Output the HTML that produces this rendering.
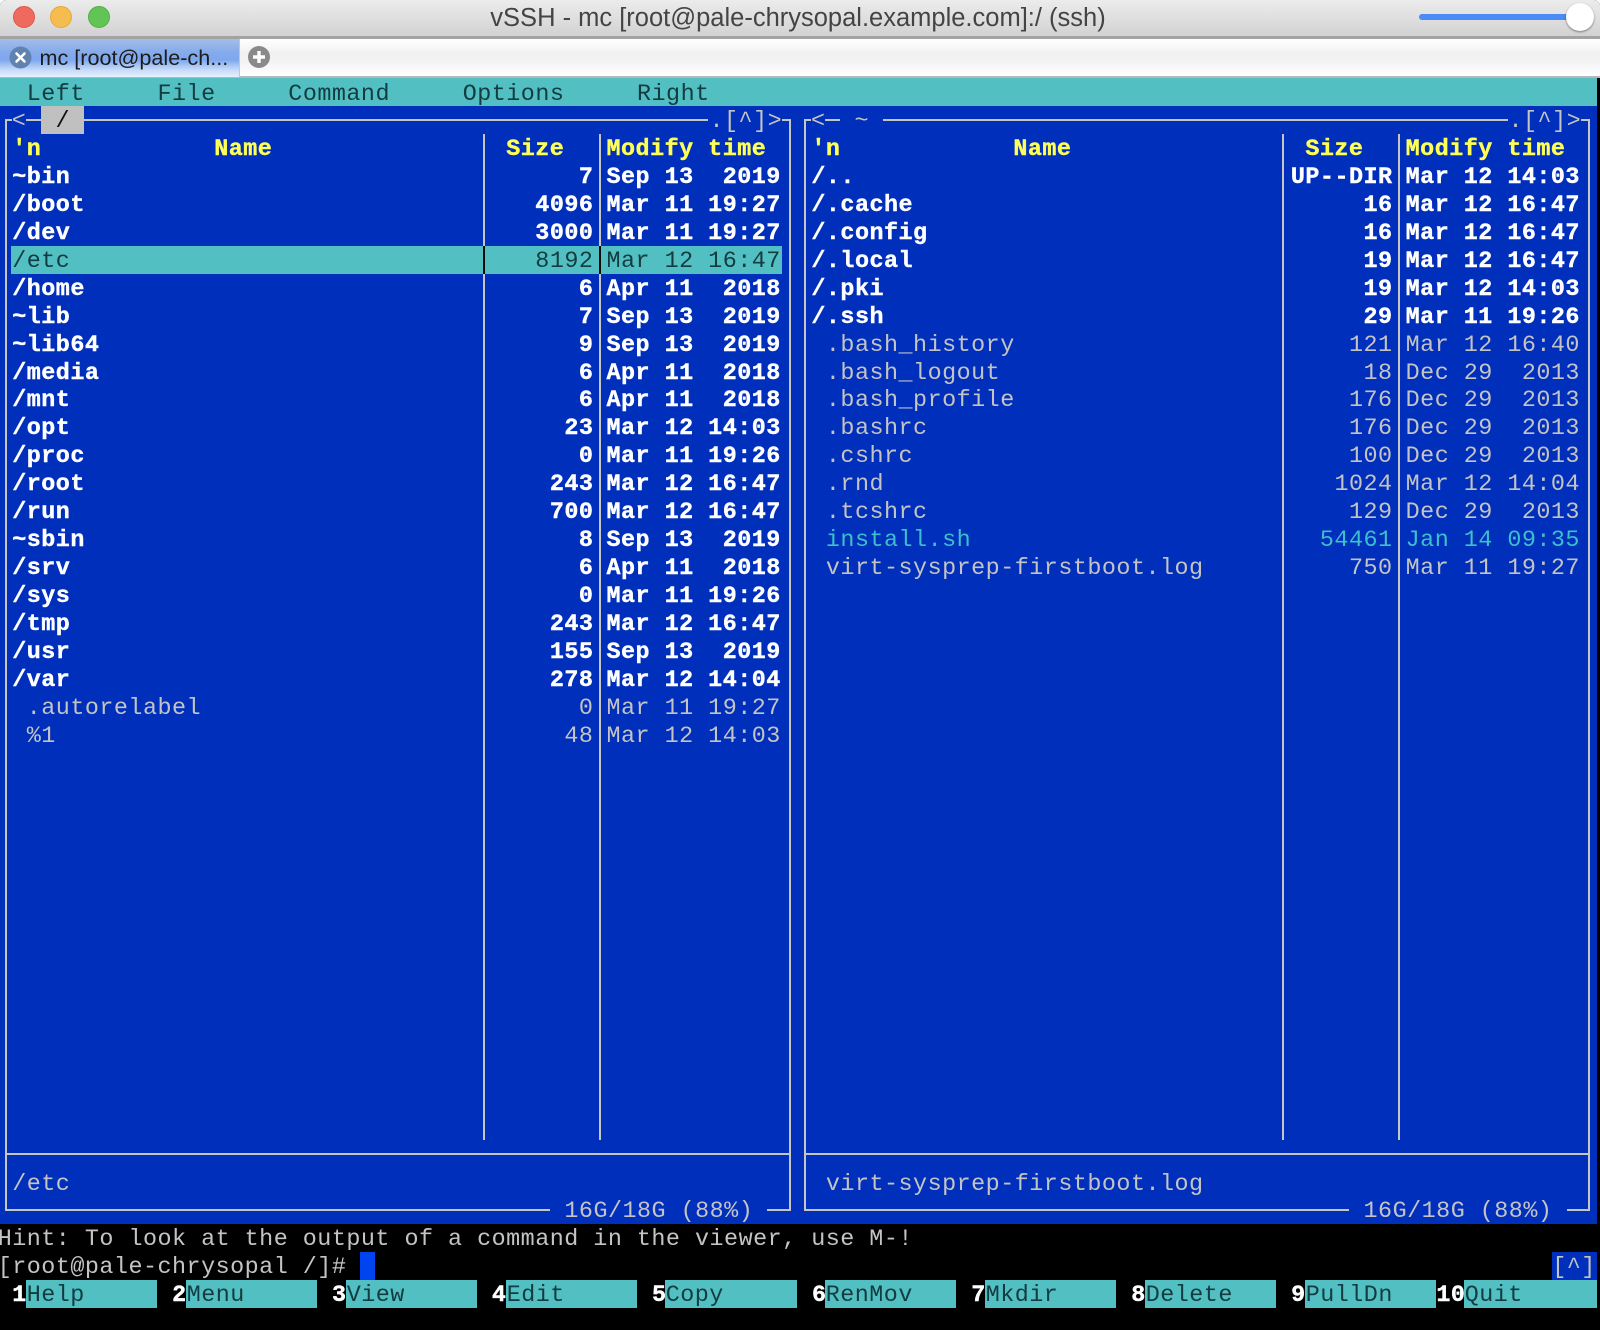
<!DOCTYPE html>
<html><head><meta charset="utf-8"><title>vSSH - mc</title>
<style>
html,body{margin:0;padding:0;background:#fff}
#w{position:relative;width:1600px;height:1330px;overflow:hidden;background:#000;font-family:"Liberation Sans",sans-serif;border-radius:6px 6px 0 0}
#w div,#w span{position:absolute;box-sizing:border-box}
#tb{left:0;top:0;width:1600px;height:39px;background:linear-gradient(#ececec,#d2d2d2);border-bottom:3px solid #a3a3a3}
.tl{width:22px;height:22px;border-radius:50%;top:6px}
#title{left:0;top:0;width:1596px;height:36px;line-height:36px;text-align:center;font-size:25.5px;color:#444;white-space:pre}
#track{left:1419px;top:14px;width:160px;height:6px;border-radius:3px;background:#4a8bf5}
#knob{left:1566px;top:3px;width:28px;height:28px;border-radius:50%;background:#fff;box-shadow:0 1px 2px rgba(0,0,0,.45)}
#tabs{left:0;top:39px;width:1600px;height:39px;background:linear-gradient(#fff 0,#f1f1f1 40%,#f3f3f3 60%,#fff 100%);border-bottom:2px solid #b8b8b8}
#tab{left:0;top:39px;width:239.5px;height:38px;background:linear-gradient(#a2bde9 0,#85abeb 35%,#7ea7ee 55%,#c4d9f8 80%,#e6f0fd 100%);border-right:1px solid #c6c6c6}
#tabt{left:39.5px;top:39px;height:38px;line-height:38px;font-size:21.6px;color:#1c1c1c;white-space:pre}
#term{left:0;top:0;width:1600px;height:1330px;font-family:"Liberation Mono",monospace;font-size:23.4px;letter-spacing:.49px;line-height:32px;color:#c8c8c8}
.t{white-space:pre;height:27.93px}
.b{font-weight:700;color:#fff;-webkit-text-stroke:.4px #fff}
.y{font-weight:700;color:#ffff55;-webkit-text-stroke:.4px #ffff55}
.k{color:#123c40}
.g{color:#c4c4c4}
.c{color:#3cc0ca}
.ln{background:#c6c6c6}
.row{left:0;width:799px;height:27.93px}
.n{left:14.53px;top:0;white-space:pre}
.s{left:494.02px;top:0;width:101.7px;text-align:right;white-space:pre}
.d{left:608.8px;top:0;white-space:pre}
.fb{left:0;top:0;width:100%;height:100%}
</style></head><body>
<div id="w">
<div id="term">
<div style="left:0;top:78px;width:1596.7px;height:28px;background:#52c0c3"></div>
<div style="left:0;top:106px;width:1596.7px;height:1118px;background:#002fbc"></div>
<div style="left:11px;top:245.7px;width:770.7px;height:28px;background:#52c0c3"></div>
<div style="left:40.6px;top:106px;width:43.6px;height:28px;background:#c0c0c0"></div>
<div style="left:360.2px;top:1251.7px;width:14.6px;height:28px;background:#0044f0"></div>
<div style="left:1551.7px;top:1251.7px;width:45px;height:28px;background:#002fbc"></div>
<div style="left:26px;top:1279.5px;width:131px;height:28.5px;background:#52c0c3"></div>
<div style="left:186px;top:1279.5px;width:131px;height:28.5px;background:#52c0c3"></div>
<div style="left:346px;top:1279.5px;width:131px;height:28.5px;background:#52c0c3"></div>
<div style="left:506px;top:1279.5px;width:131px;height:28.5px;background:#52c0c3"></div>
<div style="left:665px;top:1279.5px;width:132px;height:28.5px;background:#52c0c3"></div>
<div style="left:825px;top:1279.5px;width:131px;height:28.5px;background:#52c0c3"></div>
<div style="left:985px;top:1279.5px;width:131px;height:28.5px;background:#52c0c3"></div>
<div style="left:1145px;top:1279.5px;width:131px;height:28.5px;background:#52c0c3"></div>
<div style="left:1305px;top:1279.5px;width:131px;height:28.5px;background:#52c0c3"></div>
<div style="left:1464px;top:1279.5px;width:132.7px;height:28.5px;background:#52c0c3"></div>
<div class="ln" style="left:4.5px;top:119px;width:2px;height:1092px"></div>
<div class="ln" style="left:788.5px;top:119px;width:2px;height:1092px"></div>
<div class="ln" style="left:4.5px;top:119px;width:7px;height:2px"></div>
<div class="ln" style="left:26px;top:119px;width:14.6px;height:2px"></div>
<div class="ln" style="left:84.2px;top:119px;width:624px;height:2px"></div>
<div class="ln" style="left:781.5px;top:119px;width:8px;height:2px"></div>
<div class="ln" style="left:4.5px;top:1153px;width:785px;height:2px"></div>
<div class="ln" style="left:4.5px;top:1209px;width:545px;height:2px"></div>
<div class="ln" style="left:767px;top:1209px;width:22px;height:2px"></div>
<div class="ln" style="left:483px;top:134px;width:2px;height:1006px"></div>
<div class="ln" style="left:598.5px;top:134px;width:2px;height:1006px"></div>
<div style="left:483px;top:245.7px;width:2px;height:28px;background:#0a0a0a"></div>
<div style="left:598.5px;top:245.7px;width:2px;height:28px;background:#0a0a0a"></div>
<div class="ln" style="left:803.5px;top:119px;width:2px;height:1092px"></div>
<div class="ln" style="left:1588px;top:119px;width:2px;height:1092px"></div>
<div class="ln" style="left:803.5px;top:119px;width:7px;height:2px"></div>
<div class="ln" style="left:825px;top:119px;width:14.6px;height:2px"></div>
<div class="ln" style="left:883px;top:119px;width:624.5px;height:2px"></div>
<div class="ln" style="left:1581px;top:119px;width:8px;height:2px"></div>
<div class="ln" style="left:803.5px;top:1153px;width:786px;height:2px"></div>
<div class="ln" style="left:803.5px;top:1209px;width:545px;height:2px"></div>
<div class="ln" style="left:1566.5px;top:1209px;width:23px;height:2px"></div>
<div class="ln" style="left:1282px;top:134px;width:2px;height:1006px"></div>
<div class="ln" style="left:1397.5px;top:134px;width:2px;height:1006px"></div>
<div class="t k" style="left:26.7px;top:78.5px">Left</div>
<div class="t k" style="left:157.5px;top:78.5px">File</div>
<div class="t k" style="left:288.3px;top:78.5px">Command</div>
<div class="t k" style="left:462.7px;top:78.5px">Options</div>
<div class="t k" style="left:637px;top:78.5px">Right</div>
<div class="t g" style="left:11.8px;top:106px">&lt;</div>
<div class="t k" style="left:55.5px;top:106px;color:#111">/</div>
<div class="t g" style="left:709.5px;top:106px">.[^]&gt;</div>
<div class="t g" style="left:811px;top:106px">&lt;</div>
<div class="t g" style="left:854.5px;top:106px">~</div>
<div class="t g" style="left:1508.5px;top:106px">.[^]&gt;</div>
<div class="fb" style="left:-2.3px">
<div class="row" style="top:134px"><span class="n y">'n</span><span class="y" style="left:216.5px">Name</span><span class="y" style="left:508.5px">Size</span><span class="d y">Modify time</span></div>
<div class="row b" style="top:162px"><span class="n">~bin</span><span class="s">7</span><span class="d">Sep 13  2019</span></div>
<div class="row b" style="top:189.9px"><span class="n">/boot</span><span class="s">4096</span><span class="d">Mar 11 19:27</span></div>
<div class="row b" style="top:217.9px"><span class="n">/dev</span><span class="s">3000</span><span class="d">Mar 11 19:27</span></div>
<div class="row k" style="top:245.8px"><span class="n">/etc</span><span class="s">8192</span><span class="d">Mar 12 16:47</span></div>
<div class="row b" style="top:273.7px"><span class="n">/home</span><span class="s">6</span><span class="d">Apr 11  2018</span></div>
<div class="row b" style="top:301.7px"><span class="n">~lib</span><span class="s">7</span><span class="d">Sep 13  2019</span></div>
<div class="row b" style="top:329.6px"><span class="n">~lib64</span><span class="s">9</span><span class="d">Sep 13  2019</span></div>
<div class="row b" style="top:357.5px"><span class="n">/media</span><span class="s">6</span><span class="d">Apr 11  2018</span></div>
<div class="row b" style="top:385.4px"><span class="n">/mnt</span><span class="s">6</span><span class="d">Apr 11  2018</span></div>
<div class="row b" style="top:413.4px"><span class="n">/opt</span><span class="s">23</span><span class="d">Mar 12 14:03</span></div>
<div class="row b" style="top:441.3px"><span class="n">/proc</span><span class="s">0</span><span class="d">Mar 11 19:26</span></div>
<div class="row b" style="top:469.2px"><span class="n">/root</span><span class="s">243</span><span class="d">Mar 12 16:47</span></div>
<div class="row b" style="top:497.2px"><span class="n">/run</span><span class="s">700</span><span class="d">Mar 12 16:47</span></div>
<div class="row b" style="top:525.1px"><span class="n">~sbin</span><span class="s">8</span><span class="d">Sep 13  2019</span></div>
<div class="row b" style="top:553px"><span class="n">/srv</span><span class="s">6</span><span class="d">Apr 11  2018</span></div>
<div class="row b" style="top:580.9px"><span class="n">/sys</span><span class="s">0</span><span class="d">Mar 11 19:26</span></div>
<div class="row b" style="top:608.9px"><span class="n">/tmp</span><span class="s">243</span><span class="d">Mar 12 16:47</span></div>
<div class="row b" style="top:636.8px"><span class="n">/usr</span><span class="s">155</span><span class="d">Sep 13  2019</span></div>
<div class="row b" style="top:664.7px"><span class="n">/var</span><span class="s">278</span><span class="d">Mar 12 14:04</span></div>
<div class="row g" style="top:692.7px"><span class="n"> .autorelabel</span><span class="s">0</span><span class="d">Mar 11 19:27</span></div>
<div class="row g" style="top:720.6px"><span class="n"> %1</span><span class="s">48</span><span class="d">Mar 12 14:03</span></div>
<div class="row g" style="top:1168.5px"><span class="n">/etc</span></div>
<div class="row g" style="top:1196px"><span style="left:566.7px;white-space:pre">16G/18G (88%)</span></div>
</div>
<div class="fb" style="left:796.85px">
<div class="row" style="top:134px"><span class="n y">'n</span><span class="y" style="left:216.5px">Name</span><span class="y" style="left:508.5px">Size</span><span class="d y">Modify time</span></div>
<div class="row b" style="top:162px"><span class="n">/..</span><span class="s">UP--DIR</span><span class="d">Mar 12 14:03</span></div>
<div class="row b" style="top:189.9px"><span class="n">/.cache</span><span class="s">16</span><span class="d">Mar 12 16:47</span></div>
<div class="row b" style="top:217.9px"><span class="n">/.config</span><span class="s">16</span><span class="d">Mar 12 16:47</span></div>
<div class="row b" style="top:245.8px"><span class="n">/.local</span><span class="s">19</span><span class="d">Mar 12 16:47</span></div>
<div class="row b" style="top:273.7px"><span class="n">/.pki</span><span class="s">19</span><span class="d">Mar 12 14:03</span></div>
<div class="row b" style="top:301.7px"><span class="n">/.ssh</span><span class="s">29</span><span class="d">Mar 11 19:26</span></div>
<div class="row g" style="top:329.6px"><span class="n"> .bash_history</span><span class="s">121</span><span class="d">Mar 12 16:40</span></div>
<div class="row g" style="top:357.5px"><span class="n"> .bash_logout</span><span class="s">18</span><span class="d">Dec 29  2013</span></div>
<div class="row g" style="top:385.4px"><span class="n"> .bash_profile</span><span class="s">176</span><span class="d">Dec 29  2013</span></div>
<div class="row g" style="top:413.4px"><span class="n"> .bashrc</span><span class="s">176</span><span class="d">Dec 29  2013</span></div>
<div class="row g" style="top:441.3px"><span class="n"> .cshrc</span><span class="s">100</span><span class="d">Dec 29  2013</span></div>
<div class="row g" style="top:469.2px"><span class="n"> .rnd</span><span class="s">1024</span><span class="d">Mar 12 14:04</span></div>
<div class="row g" style="top:497.2px"><span class="n"> .tcshrc</span><span class="s">129</span><span class="d">Dec 29  2013</span></div>
<div class="row c" style="top:525.1px"><span class="n"> install.sh</span><span class="s">54461</span><span class="d">Jan 14 09:35</span></div>
<div class="row g" style="top:553px"><span class="n"> virt-sysprep-firstboot.log</span><span class="s">750</span><span class="d">Mar 11 19:27</span></div>
<div class="row g" style="top:1168.5px"><span class="n"> virt-sysprep-firstboot.log</span></div>
<div class="row g" style="top:1196px"><span style="left:566.7px;white-space:pre">16G/18G (88%)</span></div>
</div>
<div class="t g" style="left:-2.3px;top:1223.7px">Hint: To look at the output of a command in the viewer, use M-!</div>
<div class="t g" style="left:-2.3px;top:1251.7px">[root@pale-chrysopal /]#</div>
<div class="t g" style="left:1552.2px;top:1251.7px">[^]</div>
<div class="t b" style="left:12.2px;top:1279.6px">1</div><div class="t k" style="left:26.7px;top:1279.6px">Help</div>
<div class="t b" style="left:172.1px;top:1279.6px">2</div><div class="t k" style="left:186.7px;top:1279.6px">Menu</div>
<div class="t b" style="left:332px;top:1279.6px">3</div><div class="t k" style="left:346.7px;top:1279.6px">View</div>
<div class="t b" style="left:491.9px;top:1279.6px">4</div><div class="t k" style="left:506.7px;top:1279.6px">Edit</div>
<div class="t b" style="left:652px;top:1279.6px">5</div><div class="t k" style="left:665.7px;top:1279.6px">Copy</div>
<div class="t b" style="left:812px;top:1279.6px">6</div><div class="t k" style="left:825.7px;top:1279.6px">RenMov</div>
<div class="t b" style="left:971.3px;top:1279.6px">7</div><div class="t k" style="left:985.7px;top:1279.6px">Mkdir</div>
<div class="t b" style="left:1131.2px;top:1279.6px">8</div><div class="t k" style="left:1145.7px;top:1279.6px">Delete</div>
<div class="t b" style="left:1291.1px;top:1279.6px">9</div><div class="t k" style="left:1305.7px;top:1279.6px">PullDn</div>
<div class="t b" style="left:1436.4px;top:1279.6px">10</div><div class="t k" style="left:1464.7px;top:1279.6px">Quit</div>
</div>
<div id="tabs"></div>
<div id="tab"></div>
<svg style="position:absolute;left:9px;top:46px" width="24" height="24" viewBox="0 0 24 24"><circle cx="11.5" cy="11.5" r="11" fill="#5f82b0"/><path d="M7.5 7.5L15.5 15.5M15.5 7.5L7.5 15.5" stroke="#fff" stroke-width="2.6" stroke-linecap="round"/></svg>
<div id="tabt">mc [root@pale-ch...</div>
<svg style="position:absolute;left:247px;top:45px" width="24" height="24" viewBox="0 0 24 24"><circle cx="12" cy="12" r="11" fill="#8a8a8a"/><path d="M12 6V18M6 12H18" stroke="#fff" stroke-width="3.4"/></svg>
<div id="tb"></div>
<div class="tl" style="left:13px;background:#ee6a5f;border:1px solid #e0564a"></div>
<div class="tl" style="left:50px;background:#f5bd4f;border:1px solid #e5a83a"></div>
<div class="tl" style="left:88px;background:#61c454;border:1px solid #52b045"></div>
<div id="title">vSSH - mc [root@pale-chrysopal.example.com]:/ (ssh)</div>
<div id="track"></div>
<div id="knob"></div>
</div>
</body></html>
